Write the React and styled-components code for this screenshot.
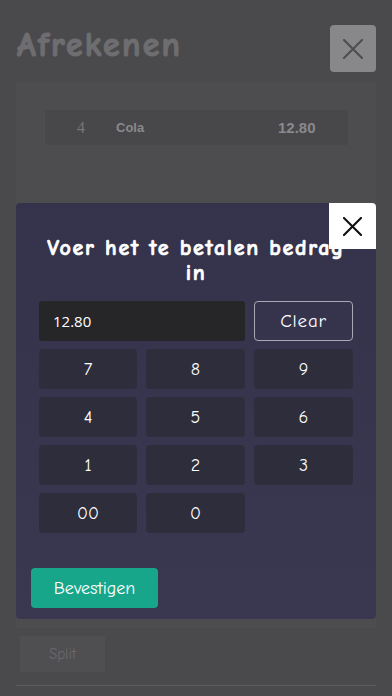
import React, { useState } from "react";
import styled, { createGlobalStyle } from "styled-components";

const GlobalStyle = createGlobalStyle`
  html, body {
    margin: 0;
    padding: 0;
    background: #4a494c;
    overflow: hidden;
  }
  * { box-sizing: border-box; }
`;

const comic = `"Comic Sans MS", "Comic Neue", "DejaVu Sans", sans-serif`;

const Page = styled.div`
  position: relative;
  width: 392px;
  height: 696px;
  background: #4a494c;
  font-family: ${comic};
  display: flex;
  flex-direction: column;
  padding: 0 16px;
`;

const Header = styled.div`
  display: flex;
  justify-content: space-between;
  align-items: flex-start;
  padding-top: 25px;
  height: 82px;
`;

const Title = styled.h1`
  margin: 0;
  padding-left: 1px;
  font-size: 34px;
  line-height: 40px;
  letter-spacing: 2.2px;
  font-weight: bold;
  color: #6e6d70;
  -webkit-text-stroke: 1.2px #6e6d70;
`;

const CloseBox = styled.button`
  width: 46px;
  height: 47px;
  border: none;
  border-radius: 4px;
  background: ${(p) => (p.$light ? "#ffffff" : "#88878a")};
  display: flex;
  align-items: center;
  justify-content: center;
  padding: 0;
  color: ${(p) => (p.$light ? "#111" : "#4d4c4f")};
`;

const Panel = styled.div`
  height: 546px;
  background: #4d4c4f;
  padding: 28px 28px 0 29px;
`;

const OrderRow = styled.div`
  display: flex;
  align-items: center;
  height: 35px;
  background: #48474a;
  border-radius: 3px;
  padding-left: 32px;
  color: #8a898c;
`;

const Qty = styled.span`
  width: 39px;
  font-family: "Liberation Serif", serif;
  font-size: 16px;
  color: #767578;
`;

const Name = styled.span`
  flex: 1;
  font-family: "Liberation Sans", Arial, sans-serif;
  font-size: 13px;
  font-weight: bold;
`;

const Price = styled.span`
  width: 70px;
  font-family: "Liberation Sans", Arial, sans-serif;
  font-size: 15px;
  font-weight: bold;
`;

const Footer = styled.div`
  display: flex;
  padding: 8px 4px 0;
  height: 58px;
  border-bottom: 1px solid #5c5b5e;
`;

const SplitButton = styled.div`
  width: 85px;
  height: 36px;
  background: #4f4e51;
  color: #6a696c;
  font-size: 15px;
  display: flex;
  align-items: center;
  justify-content: center;
`;

const Backdrop = styled.div`
  position: absolute;
  inset: 0;
  padding: 203px 16px 0;
`;

const Modal = styled.div`
  position: relative;
  height: 416px;
  background: linear-gradient(180deg, #35334b 0%, #3a3751 100%);
  border-radius: 4px;
  padding: 33px 15px 11px;
  display: flex;
  flex-direction: column;
`;

const ModalClose = styled(CloseBox)`
  position: absolute;
  top: 0;
  right: 0;
  height: 46px;
  width: 47px;
  border-radius: 0 4px 0 0;
`;

const ModalTitle = styled.h2`
  margin: 0 4px;
  text-align: center;
  color: #ffffff;
  font-size: 22px;
  line-height: 25px;
  letter-spacing: 1.7px;
  font-weight: bold;
  -webkit-text-stroke: 0.7px #ffffff;
`;

const Pad = styled.div`
  margin: 15px 8px 0;
  display: grid;
  grid-template-columns: 98px 99px 99px;
  grid-auto-rows: 40px;
  column-gap: 9px;
  row-gap: 8px;
`;

const Display = styled.div`
  grid-column: span 2;
  background: #262528;
  border-radius: 3px;
  color: #fff;
  font-family: "Open Sans", "Noto Sans", sans-serif;
  font-size: 15px;
  display: flex;
  align-items: center;
  padding-left: 14px;
`;

const ClearButton = styled.button`
  background: transparent;
  border: 1px solid #a9a8b6;
  border-radius: 4px;
  color: #fff;
  font-family: ${comic};
  font-size: 19px;
  letter-spacing: 0.8px;
`;

const Key = styled.button`
  background: #2e2d3b;
  border: none;
  border-radius: 4px;
  color: #fff;
  font-family: ${comic};
  font-size: 18px;
`;

const Confirm = styled.button`
  margin-top: auto;
  align-self: flex-start;
  width: 127px;
  height: 40px;
  background: #17a68a;
  border: none;
  border-radius: 4px;
  color: #fff;
  font-family: ${comic};
  font-size: 18px;
`;

const Cross = ({ size, stroke }) => (
  <svg width={size} height={size} viewBox="0 0 20 20" fill="none">
    <path d="M1 1L19 19M19 1L1 19" stroke="currentColor" strokeWidth={stroke} strokeLinecap="square" />
  </svg>
);

const keys = ["7", "8", "9", "4", "5", "6", "1", "2", "3", "00", "0"];

const App = () => {
  const [amount, setAmount] = useState("12.80");

  return (
    <>
      <GlobalStyle />
      <Page>
        <Header>
          <Title>Afrekenen</Title>
          <CloseBox>
            <Cross size={20} stroke={2} />
          </CloseBox>
        </Header>
        <Panel>
          <OrderRow>
            <Qty>4</Qty>
            <Name>Cola</Name>
            <Price>12.80</Price>
          </OrderRow>
        </Panel>
        <Footer>
          <SplitButton>Split</SplitButton>
        </Footer>

        <Backdrop>
          <Modal>
            <ModalClose $light>
              <Cross size={19} stroke={2.2} />
            </ModalClose>
            <ModalTitle>Voer het te betalen bedrag in</ModalTitle>
            <Pad>
              <Display>{amount}</Display>
              <ClearButton onClick={() => setAmount("")}>Clear</ClearButton>
              {keys.map((k) => (
                <Key key={k} onClick={() => setAmount(amount + k)}>
                  {k}
                </Key>
              ))}
            </Pad>
            <Confirm>Bevestigen</Confirm>
          </Modal>
        </Backdrop>
      </Page>
    </>
  );
};

export default App;
